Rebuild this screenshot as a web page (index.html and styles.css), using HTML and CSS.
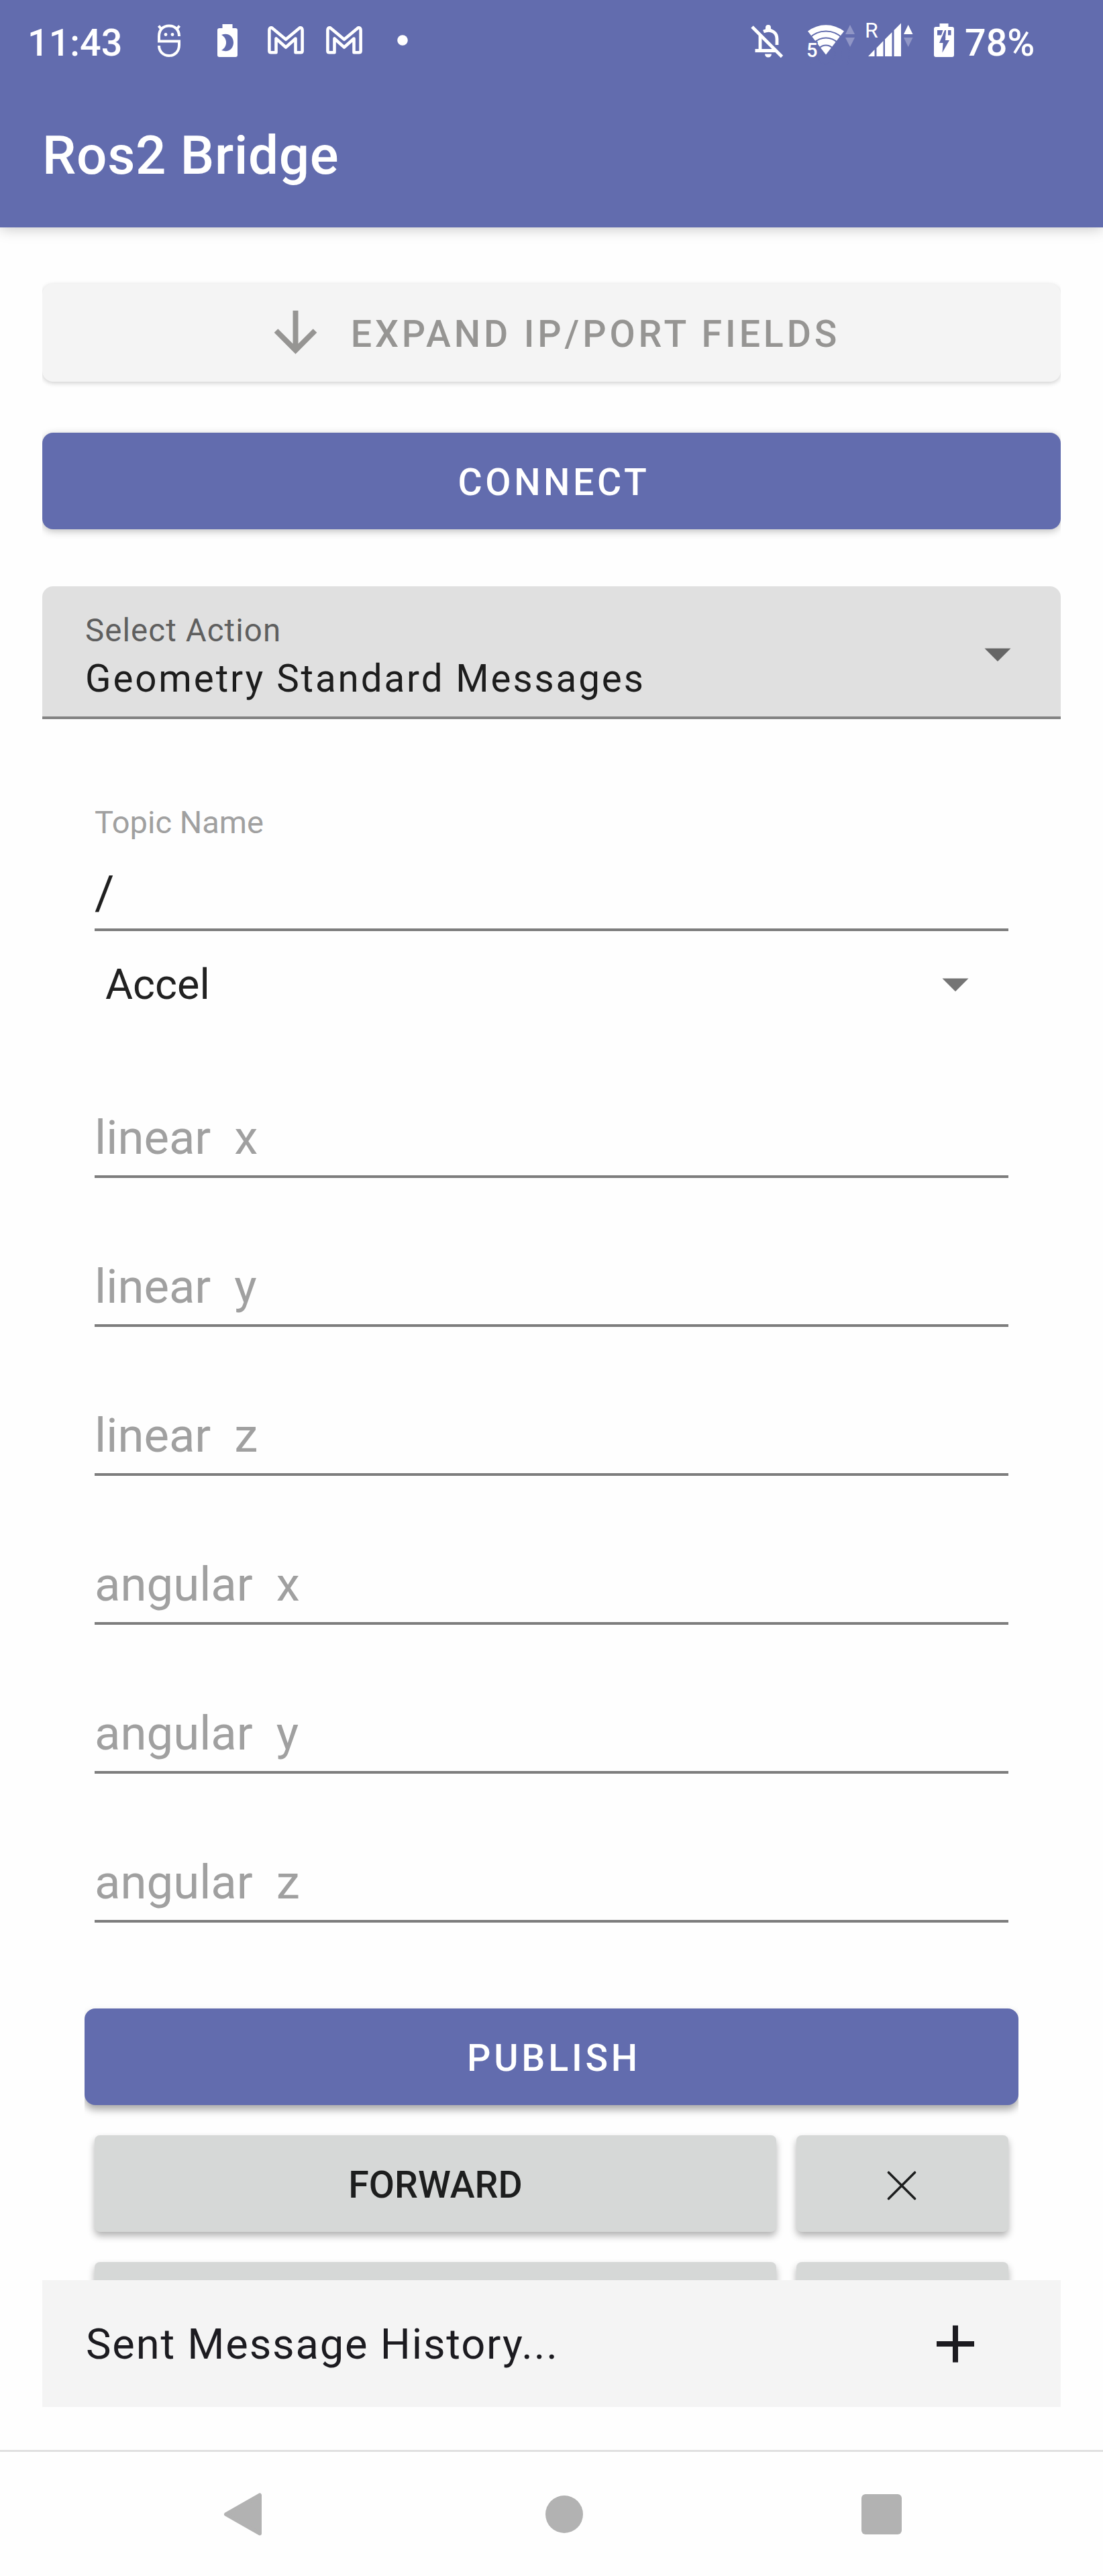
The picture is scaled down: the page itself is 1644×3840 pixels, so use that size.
FILE: index.html
```
<!DOCTYPE html>
<html lang="en">
<head>
<meta charset="utf-8">
<title>Ros2 Bridge</title>
<link rel="stylesheet" href="styles.css">
</head>
<body>
<div class="screen">
  <header class="app-header">
    <div class="status-bar">
      <span class="status-text">11:43</span>
      <svg class="ic-debug" width="44" height="67" viewBox="230 30 44 67">
        <g fill="none" stroke="#fff" stroke-width="4">
          <path d="M267 54C267 44 260.500 38.500 252 38.500S237 44 237 54V61.500H267V67C267 77 260.500 83 252 83S237 77 237 68"/>
          <path d="M236.500 38.500L241 44M267.500 38.500L263 44"/>
        </g>
        <circle cx="247" cy="51.500" r="2.400" fill="#fff"/><circle cx="257" cy="51.500" r="2.400" fill="#fff"/>
      </svg>
      <svg class="ic-saver" width="40" height="67" viewBox="319 30 40 67">
        <path fill="#fff" d="M331.500 36H346.500V42H351Q354 42 354 45V82Q354 85 351 85H327Q324 85 324 82V45Q324 42 327 42H331.500Z"/>
        <path fill="#626cae" d="M330 52C341 48 348 55 348 63.500S341 79 330 75C339.500 70 339.500 57 330 52Z"/>
      </svg>
      <svg class="ic-mail" width="60" height="67" viewBox="396 30 60 67">
        <path fill="none" stroke="#fff" stroke-width="4.600" stroke-linejoin="round" d="M401.400 76V45Q401.400 41 405 41.300L426 58.800L447 41.300Q450.600 41 450.600 45V76Q450.600 78.300 448 78.300H440.500V57.500L426 70.500L411.500 57.500V78.300H404Q401.400 78.300 401.400 76Z"/>
      </svg>
      <svg class="ic-mail2" width="60" height="67" viewBox="396 30 60 67">
        <path fill="none" stroke="#fff" stroke-width="4.600" stroke-linejoin="round" d="M401.400 76V45Q401.400 41 405 41.300L426 58.800L447 41.300Q450.600 41 450.600 45V76Q450.600 78.300 448 78.300H440.500V57.500L426 70.500L411.500 57.500V78.300H404Q401.400 78.300 401.400 76Z"/>
      </svg>
      <svg class="ic-dot" width="20" height="67" viewBox="590 30 20 67"><circle cx="600" cy="60" r="7.800" fill="#fff"/></svg>

      <svg class="ic-bell" width="54" height="67" viewBox="1116 30 54 67">
        <g fill="none" stroke="#fff" stroke-width="4.800">
          <path d="M1121 40L1165.500 84.500"/>
          <path d="M1133 53V75.500M1125.500 75.500H1156M1138 47C1150 42 1158 49 1158 58V67"/>
        </g>
        <path fill="#fff" d="M1141 45V41Q1141 37 1145 37T1149 41V45ZM1140 80.500H1150Q1149.500 85.500 1145 85.500T1140 80.500Z"/>
      </svg>
      <svg class="ic-wifi" width="80" height="67" viewBox="1200 30 80 67">
        <path fill="#fff" d="M1231 81.500L1204 46.500A44.500 44.500 0 0 1 1258 46.500Z"/>
        <g fill="none" stroke="#626cae" stroke-width="2">
          <circle cx="1231" cy="81.500" r="35"/><circle cx="1231" cy="81.500" r="25"/><circle cx="1231" cy="81.500" r="14"/>
        </g>
        <text x="1202" y="84.500" class="five">5</text>
        <path fill="#9096c6" d="M1260 51L1267 37L1274 51ZM1260 56H1274L1267 70Z"/>
      </svg>
      <svg class="ic-signal" width="76" height="83" viewBox="1288 22 76 83">
        <text x="1289" y="56" class="roam">R</text>
        <path fill="#fff" d="M1294 84L1303.500 74V84ZM1306.500 84V71.500L1316.500 61V84ZM1319 84V58.500L1329.500 48V84ZM1332.500 84V45L1343 34.500V84ZM1347 51L1353.700 37L1360.500 51Z"/>
        <path fill="#9096c6" d="M1347 56H1360.500L1353.700 70Z"/>
      </svg>
      <svg class="ic-battery" width="36" height="67" viewBox="1389 30 36 67">
        <path fill="#fff" d="M1400.500 35H1413.500V40H1419Q1422 40 1422 43V82Q1422 85 1419 85H1395Q1392 85 1392 82V43Q1392 40 1395 40H1400.500Z"/>
        <path fill="#626cae" d="M1397 45H1417.500V52.500H1397Z"/>
        <path fill="#fff" d="M1406 43H1413V56H1402Z"/>
        <path fill="#626cae" d="M1410.500 45H1408L1400 64H1405.500L1404.500 78.500L1415 60H1409Z"/>
        <path fill="none" stroke="#fff" stroke-width="1.500" d="M1407.500 44L1403 55M1411 44L1410 56"/>
      </svg>
      <span class="status-text pct">78%</span>
    </div>
    <h1 class="title">Ros2 Bridge</h1>
  </header>

  <main class="content">
    <button class="btn btn-muted">
      <svg width="95" height="95" viewBox="0 0 95 95" fill="none" stroke="#969593" stroke-width="8"><path d="M47.500 12V70M18.500 42L47.500 71L76.500 42"/></svg>
      <span>EXPAND IP/PORT FIELDS</span>
    </button>
    <button class="btn btn-primary connect">CONNECT</button>

    <div class="select">
      <div class="select-text">
        <div class="select-label">Select Action</div>
        <div class="select-value">Geometry Standard Messages</div>
      </div>
      <svg width="40" height="20" viewBox="0 0 40 20"><path fill="#666" d="M0.500 0.500H39.500L20 20Z"/></svg>
    </div>

    <section class="form">
      <div class="topic">
        <label class="topic-label">Topic Name</label>
        <div class="topic-value">/</div>
      </div>
      <div class="spinner">
        <span>Accel</span>
        <svg width="40" height="20" viewBox="0 0 40 20"><path fill="#757575" d="M0.500 0.500H39.500L20 20Z"/></svg>
      </div>
      <div class="field">linear&nbsp; x</div>
      <div class="field">linear&nbsp; y</div>
      <div class="field">linear&nbsp; z</div>
      <div class="field">angular&nbsp; x</div>
      <div class="field">angular&nbsp; y</div>
      <div class="field">angular&nbsp; z</div>
    </section>

    <button class="btn btn-primary publish">PUBLISH</button>
    <div class="actions">
      <button class="btn btn-gray">FORWARD</button>
      <button class="btn btn-gray close"><svg width="44" height="44" viewBox="0 0 44 44" stroke="#1d1e1e" stroke-width="3.600" stroke-linecap="round"><path d="M2.500 2.500L41.500 41.500M41.500 2.500L2.500 41.500"/></svg></button>
      <div class="btn btn-gray"></div>
      <div class="btn btn-gray"></div>
    </div>
  </main>

  <div class="history">
    <span>Sent Message History...</span>
    <svg width="56" height="56" viewBox="0 0 56 56"><path fill="#1c1b20" d="M24 0.500H32V24H56V32H32V55.500H24V32H0V24H24Z"/></svg>
  </div>

  <nav class="nav-bar">
    <svg class="nav-back" width="58" height="66" viewBox="0 0 58 66"><path fill="#b2b2b2" stroke="#b2b2b2" stroke-width="6" stroke-linejoin="round" d="M54 4.500V61.500L4 33Z"/></svg>
    <span class="nav-home"></span>
    <span class="nav-recent"></span>
  </nav>
</div>
</body>
</html>
```
FILE: styles.css
```
* { box-sizing: border-box; }
body { margin: 0; background: #fefefe; font-family: Roboto, sans-serif; }
svg { display: block; flex: none; }

.screen { width: 1644px; height: 3840px; display: flex; flex-direction: column; overflow: hidden; background: #fefefe; }

/* Status bar and title */
.app-header { flex: none; height: 339px; background: #626cae; color: #fff; box-shadow: 0 2px 20px rgba(0, 0, 0, .22); }
.status-bar { height: 127px; padding-left: 41px; display: flex; align-items: center; }
.status-text { font-size: 55.700px; font-weight: 500; line-height: 64px; width: 142px; white-space: nowrap; }
.ic-debug { margin-left: 47px; }
.ic-saver { margin-left: 45px; }
.ic-mail { margin-left: 37px; }
.ic-mail2 { margin-left: 27px; }
.ic-dot { margin-left: 47px; }
.ic-bell { margin-left: 506px; }
.ic-wifi { margin-left: 30px; }
.ic-signal { margin-left: 8px; }
.ic-battery { margin-left: 25px; }
.pct { margin-left: 13px; }
.five { font: 500 29px Roboto, sans-serif; fill: #fff; stroke: #626cae; stroke-width: 4px; paint-order: stroke; }
.roam { font: 400 32px Roboto, sans-serif; fill: #fff; }
.title { margin: 0; height: 211px; padding-left: 63px; font-size: 80px; font-weight: 500; line-height: 211px; letter-spacing: .7px; }

/* Scrolling content */
.content { flex: none; height: 3060px; padding: 84px 63px 0; display: flex; flex-direction: column; overflow: hidden; }
.btn { flex: none; border: 0; margin: 0; padding: 5px 0 0; height: 144px; display: flex; align-items: center; justify-content: center; font: 500 55.500px/64px Roboto, sans-serif; letter-spacing: 4.800px; border-radius: 16px; }
.btn-muted { height: 146px; gap: 35px; background: #f4f4f4; color: #969593; letter-spacing: 4.880px; padding-left: 1px; box-shadow: 0 2px 7px rgba(0, 0, 0, .2); clip-path: inset(-24px 0 -24px 0); }
.btn-primary { padding-left: 7px; background: #626cae; color: #fff; box-shadow: 0 3px 12px rgba(0, 0, 0, .25); clip-path: inset(-24px 0 -24px 0); }
.connect { margin-top: 76px; letter-spacing: 4.600px; }
.publish { margin: 128px 63px 0; box-shadow: 0 7px 12px rgba(0, 0, 0, .34); }
.btn-gray { background: #d6d8d7; color: #1d1e1e; letter-spacing: 0; border-radius: 8px; box-shadow: 0 6px 11px rgba(0, 0, 0, .3); }

.select { flex: none; margin-top: 85px; height: 198px; padding: 38px 74px 0 64px; display: flex; justify-content: space-between; background: #e0e0e0; border-bottom: 4px solid #838383; border-radius: 16px 16px 0 0; }
.select svg { margin-top: 54px; }
.select-label { font-size: 47.400px; line-height: 56px; letter-spacing: 1.100px; color: #5f5f5f; }
.select-value { margin-top: 8px; font-size: 56.500px; line-height: 72px; letter-spacing: 2.900px; color: #1d1d1d; white-space: nowrap; }

.form { flex: none; padding: 0 78px; }
.topic { height: 316px; padding-top: 126px; border-bottom: 4px solid #7d7d7d; }
.topic-label { display: block; font-size: 47px; line-height: 56px; color: #a0a0a0; }
.topic-value { margin-top: 37px; font-size: 71px; line-height: 80px; color: #1f1f1f; }
.spinner { height: 146px; padding: 14px 59px 0 16px; display: flex; align-items: center; justify-content: space-between; font-size: 63px; line-height: 76px; color: #212121; }
.field { height: 222px; padding-bottom: 16px; display: flex; align-items: flex-end; border-bottom: 4px solid #7d7d7d; font-size: 70.700px; line-height: 80px; color: #a0a0a0; }

.actions { flex: none; margin-top: 45px; padding: 0 78px; display: grid; grid-template-columns: 1016px 316px; grid-auto-rows: 144px; gap: 45px 30px; }
.close { padding-right: 3px; }

.history { flex: none; height: 189px; margin: 0 63px; padding: 0 129px 0 65px; display: flex; align-items: center; justify-content: space-between; background: #f4f4f4; color: #1c1b20; font-size: 63.200px; line-height: 76px; letter-spacing: 1.820px; }

/* System navigation */
.nav-bar { flex: none; margin-top: 64px; height: 188px; border-top: 3px solid #e0e0e0; padding-left: 333px; display: flex; align-items: center; }
.nav-home { margin-left: 422px; width: 56px; height: 56px; border-radius: 50%; background: #b2b2b2; }
.nav-recent { margin-left: 415px; width: 60px; height: 60px; border-radius: 6px; background: #b2b2b2; }
```
